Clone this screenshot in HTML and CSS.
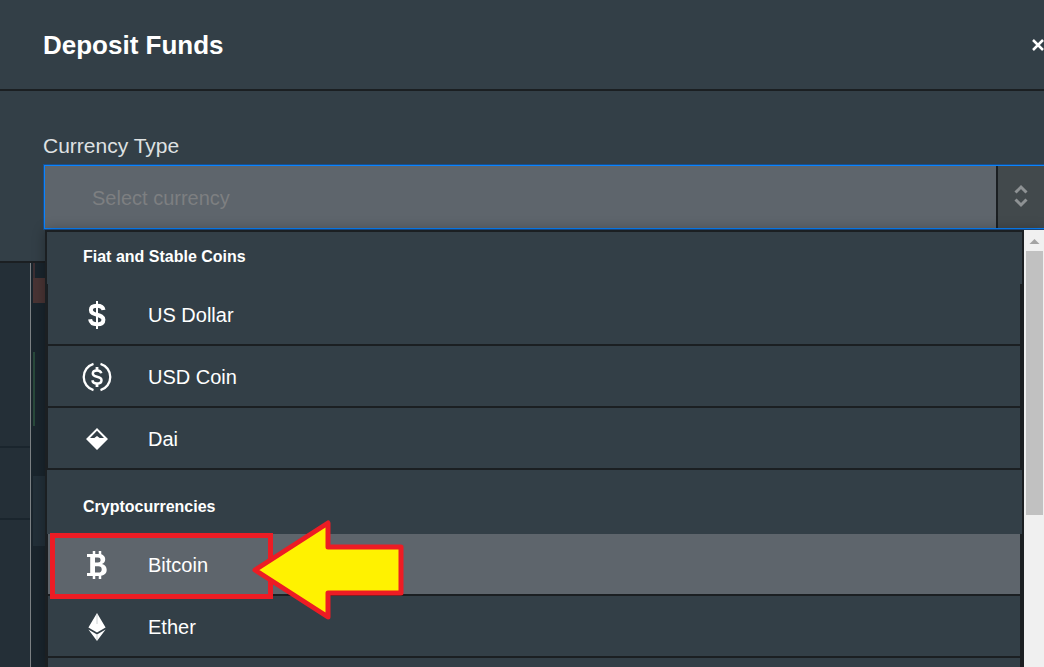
FILE: index.html
```
<!DOCTYPE html>
<html lang="en">
<head>
  <meta charset="UTF-8" />
  <title>Deposit Funds</title>
  <meta name="viewport" content="width=device-width, initial-scale=1.0"/>
  <link rel="stylesheet" href="styles.css">
</head>
<body>

  <!-- Deposit modal -->
  <div class="modal">
    <header class="modal-header">
      <h1>Deposit Funds</h1>
      <button class="close" type="button" aria-label="Close">
        <svg width="12" height="12" viewBox="0 0 12 12"><path d="M1 1l10 10M11 1L1 11" stroke="#fff" stroke-width="2.500"/></svg>
      </button>
    </header>

    <div class="modal-body">
      <label for="currency">Currency Type</label>
      <div class="select">
        <div class="select-box">
          <input type="text" id="currency" placeholder="Select currency" autocomplete="off" />
          <button class="toggle" type="button" aria-label="Toggle list">
            <svg width="14" height="26" viewBox="0 0 14 26"><path d="M1.500 8.500L7 3l5.500 5.500M1.500 15.500L7 21l5.500-5.500" fill="none" stroke="#8e9294" stroke-width="3"/></svg>
          </button>
        </div>

        <!-- Currency list -->
        <div class="dropdown">
          <div class="options">
            <h2 class="group">Fiat and Stable Coins</h2>
            <button class="option" type="button">
              <span class="icon">
                <svg width="20" height="30" viewBox="0 0 20 30"><path d="M16.500 10C16 7 14 5.700 10 5.700S3.900 7.300 3.900 9.900c0 3.400 2.800 4 6.100 4.900 3.500.9 6.400 1.700 6.400 4.900 0 3-2.600 4.600-6.400 4.600-3.900 0-6.400-1.600-6.900-5" fill="none" stroke="#fff" stroke-width="4"/><path d="M10 1v28" stroke="#fff" stroke-width="2"/></svg>
              </span>
              US Dollar
            </button>
            <button class="option" type="button">
              <span class="icon">
                <svg width="30" height="30" viewBox="0 0 30 30" fill="none" stroke="#fff"><path d="M11.500 1.800A13.800 13.800 0 0 0 11.500 28.200M18.500 1.800A13.800 13.800 0 0 1 18.500 28.200" stroke-width="2.300"/><path d="M19.300 11.300c-.4-2-2-2.900-4.300-2.900s-4.200 1.100-4.200 3.100c0 2.200 1.900 2.700 4.200 3.200s4.500 1.200 4.500 3.500c0 2.200-1.900 3.300-4.500 3.300s-4.300-1.200-4.600-3.300" stroke-width="2.500"/><path d="M15 5v4M15 21v4" stroke-width="2.800"/></svg>
              </span>
              USD Coin
            </button>
            <button class="option" type="button">
              <span class="icon">
                <svg width="22" height="22" viewBox="0 0 22 22"><path fill="#fff" fill-rule="evenodd" d="M11 0l11 11-11 11L0 11zM11 2.800L4 9.900h4.300L11 8l2.700 1.900H18z"/></svg>
              </span>
              Dai
            </button>

            <h2 class="group group-next">Cryptocurrencies</h2>
            <button class="option active" type="button">
              <span class="icon">
                <svg width="22" height="30" viewBox="0 0 22 30"><path d="M8 1v4M14 1v4M8 25v4M14 25v4" stroke="#fff" stroke-width="2.500"/><path fill="#fff" fill-rule="evenodd" d="M1 4h11.500c4.200 0 6.700 2 6.700 5.300 0 2.400-1.200 4-3.200 4.800 2.900.8 4.700 2.800 4.700 5.700 0 4-3 6.200-7.700 6.200H1v-3h3.200V7H1zM9 7.500v5h2.900c1.800 0 2.700-.8 2.700-2.500s-.9-2.500-2.700-2.500zM9 16.200v6.300h3.400c2.200 0 3.300-1.100 3.300-3.100s-1.100-3.200-3.300-3.200z"/></svg>
              </span>
              Bitcoin
              <span class="mark"></span>
              <svg class="arrow" width="156" height="104" viewBox="0 0 156 104"><path d="M5 52L78 5v24h73v46H78v24z" fill="#fff200" stroke="#ed1c24" stroke-width="5" stroke-linejoin="round"/></svg>
            </button>
            <button class="option" type="button">
              <span class="icon">
                <svg width="18" height="28" viewBox="0 0 18 28"><path fill="#fff" d="M9 0l8.600 14.400L9 19.400l-8.600-5zM.4 16.400L9 21.400l8.600-5L9 28z"/><path d="M9 1v10M9 22v5" stroke="#ccd0d2" stroke-width="1"/></svg>
              </span>
              Ether
            </button>
            <button class="option" type="button" aria-label="More"></button>
          </div>
          <div class="scrollbar">
            <svg width="20" height="20" viewBox="0 0 20 20"><path d="M5.500 14L10.500 9l5 5z" fill="#a3a3a3"/></svg>
            <div class="thumb"></div>
          </div>
        </div>
      </div>
    </div>
  </div>

  <!-- Trading page behind the modal -->
  <div class="page">
    <div class="side">
      <div class="side-row side-first"></div>
      <div class="side-row"></div>
    </div>
    <div class="chart">
      <div class="wick"></div>
      <div class="candle"></div>
      <div class="wick wick-green"></div>
      <div class="block"></div>
    </div>
  </div>

</body>
</html>
```
FILE: styles.css
```
* { box-sizing: border-box; font-family: "Liberation Sans", Arial, sans-serif; }
body {
  margin: 0;
  height: 100vh;
  overflow: hidden;
  display: flex;
  flex-direction: column;
  background: #1a252d;
  color: #fff;
}
h1, h2 { margin: 0; }
button {
  border: none;
  padding: 0;
  color: inherit;
  cursor: pointer;
}
svg { display: block; }

/* Modal */
.modal {
  background: #333f47;
  border-bottom: 2px solid #1b1f22;
}
.modal-header {
  display: flex;
  align-items: center;
  justify-content: space-between;
  height: 91px;
  padding-left: 43px;
  border-bottom: 2px solid #1b1f22;
}
.modal-header h1 {
  font-size: 26px;
  line-height: 32px;
}
.close { background: none; }
.modal-body {
  padding: 43px 0 31px 43px;
}
.modal-body label {
  display: block;
  margin-bottom: 6px;
  font-size: 21px;
  line-height: 24px;
  color: #dfe1e2;
}

/* Select */
.select {
  position: relative;
  padding: 1px 0 1px 1px;
}
.select-box {
  display: flex;
  height: 64px;
  border: 1px solid #0a84ff;
  border-right: none;
  box-shadow: 0 0 0 1px #1a4f8c;
}
.select-box input {
  flex: 1;
  min-width: 0;
  padding: 2px 47px 0;
  border: none;
  outline: none;
  background: #5e656c;
  color: #fff;
  font-size: 20px;
}
.select-box input::placeholder { color: #7d7f81; }
.toggle {
  display: flex;
  align-items: center;
  justify-content: center;
  width: 48px;
  background: #42494c;
  border-left: 2px solid #1b1f22;
}

/* Dropdown */
.dropdown {
  position: absolute;
  z-index: 1;
  top: 100%;
  left: 2px;
  right: 0;
  height: calc(100vh - 230px);
  display: flex;
  overflow: hidden;
  box-shadow: 0 0 12px rgba(0,0,0,0.3);
}
.options {
  flex: 1;
  border: 2px solid #1b1f22;
  border-bottom: none;
  background: #1b1f22;
}
.group {
  height: 52px;
  padding: 12px 36px;
  background: #333f47;
  font-size: 16px;
  line-height: 26px;
}
.group-next {
  height: 64px;
  padding-top: 24px;
}
.option {
  position: relative;
  display: flex;
  align-items: center;
  width: calc(100% - 3px);
  height: 62px;
  margin-left: 1px;
  padding: 2px 0 0 32px;
  background: #333f47;
  border-bottom: 2px solid #1b1f22;
  font-size: 20px;
}
.option.active {
  z-index: 1;
  background: #5e656c;
}
.icon {
  display: flex;
  justify-content: center;
  width: 34px;
  margin-right: 34px;
}

/* Highlight */
.mark {
  position: absolute;
  top: -1px;
  left: 2px;
  width: 223px;
  height: 66px;
  border: 5px solid #ed1c24;
}
.arrow {
  position: absolute;
  top: -16px;
  left: 202px;
}

/* Scrollbar */
.scrollbar {
  width: 20px;
  background: #f0f0f0;
}
.thumb {
  height: 264px;
  margin: 1px 1px 0 2px;
  background: #c1c1c1;
}

/* Page behind */
.page {
  flex: 1;
  display: flex;
}
.side {
  width: 31px;
  background: #242f37;
  border-right: 1px solid #7b8083;
}
.side-row {
  height: 72px;
  border-bottom: 2px solid #1a252d;
}
.side-first { height: 185px; }
.chart { padding-left: 2px; }
.wick {
  width: 2px;
  height: 15px;
  background: #3c2f33;
}
.candle {
  width: 20px;
  height: 25px;
  background: #493434;
}
.wick-green {
  height: 74px;
  margin: 49px 0 50px;
  background: #28493b;
}
.block {
  width: 20px;
  height: 70px;
  background: #222f38;
}
```
